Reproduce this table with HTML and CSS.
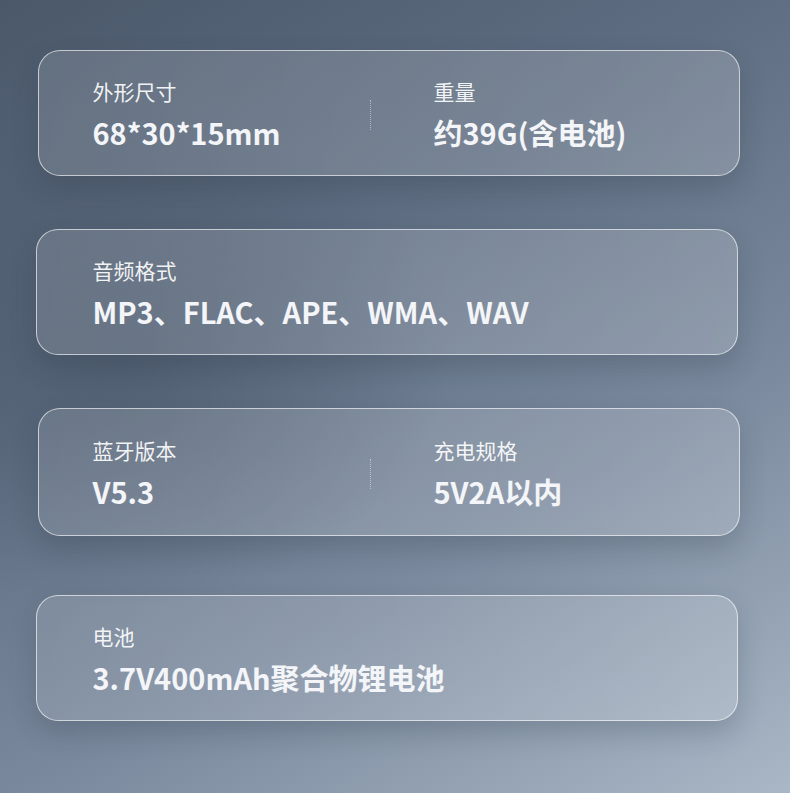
FILE: index.html
```html
<!DOCTYPE html>
<html lang="zh-CN">
<head>
  <meta charset="UTF-8" />
  <title>产品参数</title>
  <meta name="viewport" content="width=device-width, initial-scale=1.0" />
  <link rel="stylesheet" href="styles.css">
</head>
<body>
  <div class="specs">

    <!-- 尺寸 / 重量 -->
    <div class="card card-a">
      <div class="item">
        <div class="label">外形尺寸</div>
        <div class="value">68*30*15mm</div>
      </div>
      <div class="divider"></div>
      <div class="item">
        <div class="label">重量</div>
        <div class="value">约39G(含电池)</div>
      </div>
    </div>

    <!-- 音频格式 -->
    <div class="card card-b">
      <div class="item">
        <div class="label">音频格式</div>
        <div class="value">MP3、FLAC、APE、WMA、WAV</div>
      </div>
    </div>

    <!-- 蓝牙 / 充电 -->
    <div class="card card-a card-tall">
      <div class="item">
        <div class="label">蓝牙版本</div>
        <div class="value">V5.3</div>
      </div>
      <div class="divider"></div>
      <div class="item">
        <div class="label">充电规格</div>
        <div class="value">5V2A以内</div>
      </div>
    </div>

    <!-- 电池 -->
    <div class="card card-b card-last">
      <div class="item">
        <div class="label">电池</div>
        <div class="value">3.7V400mAh聚合物锂电池</div>
      </div>
    </div>

  </div>
</body>
</html>
```

FILE: styles.css
```css
* {
  box-sizing: border-box;
}

html,
body {
  height: 100%;
}

body {
  margin: 0;
  font-family: "Noto Sans CJK SC", "Noto Sans", sans-serif;
  color: #f3f5f8;
  background:
    radial-gradient(ellipse 60% 45% at 15% 45%, rgba(70, 84, 102, 0.55), rgba(70, 84, 102, 0) 70%),
    linear-gradient(150deg, #4a586a 0%, #5e6d81 35%, #7a899d 65%, #a9b7c6 100%);
  overflow: hidden;
}

.specs {
  padding-top: 50px;
}

.card {
  width: 702px;
  height: 126px;
  margin-bottom: 53px;
  padding-top: 3px;
  display: flex;
  align-items: center;
  border: 1.5px solid rgba(255, 255, 255, 0.62);
  border-radius: 22px;
  background: linear-gradient(100deg, rgba(255, 255, 255, 0.13), rgba(255, 255, 255, 0.18));
  box-shadow: 0 12px 26px rgba(38, 48, 64, 0.22);
}

.card-a {
  margin-left: 38px;
  padding-left: 53.5px;
}

.card-b {
  margin-left: 36px;
  padding-left: 55.5px;
}

.card-tall {
  height: 128px;
  margin-bottom: 59px;
}

.item {
  width: 277px;
}

.card-b .item {
  width: auto;
}

.label {
  font-size: 21px;
  line-height: 24px;
  color: rgba(255, 255, 255, 0.92);
}

.value {
  margin-top: 11px;
  font-size: 29px;
  line-height: 36px;
  font-weight: 700;
  white-space: nowrap;
}

.divider {
  width: 0;
  height: 30px;
  margin: 0 63px 0 0;
  border-left: 1px dotted rgba(255, 255, 255, 0.45);
}
```
